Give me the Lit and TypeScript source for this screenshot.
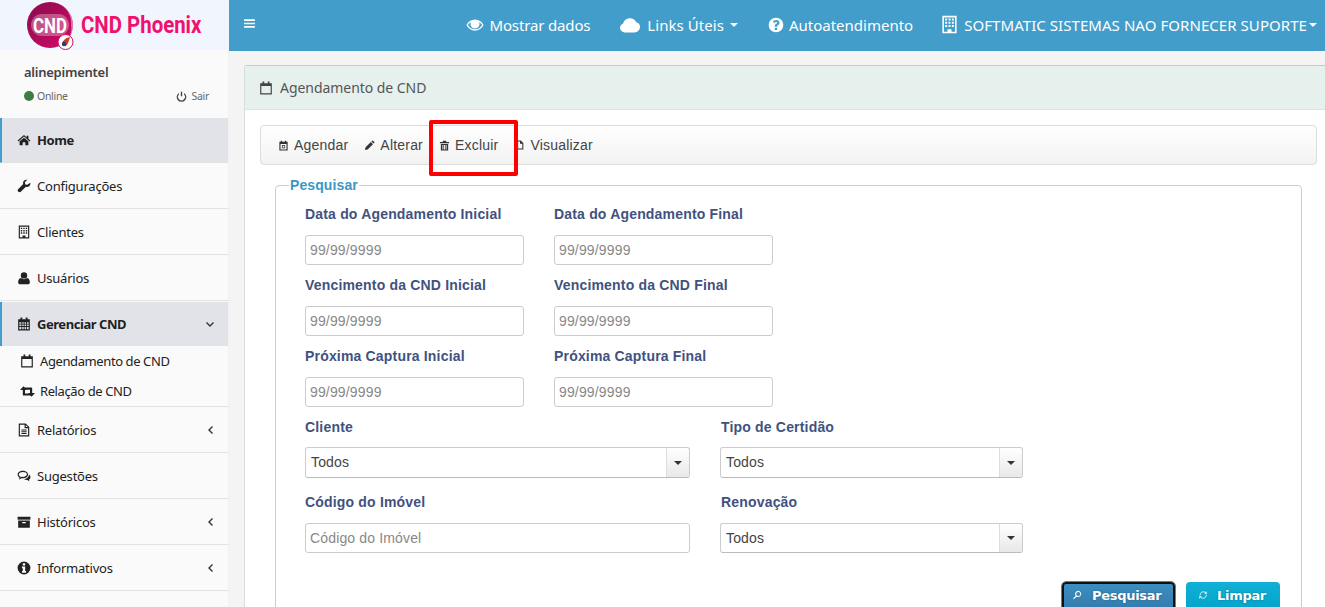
import { LitElement, html, css, svg } from "lit";
import { customElement } from "lit/decorators.js";

const ICONS: Record<string, any> = {
  home: svg`<path d="M12 3.500 1 13l1.300 1.500L12 6.200l9.700 8.300L23 13l-3.500-3V4.500h-3v3z"/><path d="M12 8 4.500 14.300V21h5.200v-5h4.600v5h5.200v-6.700z"/>`,
  wrench: svg`<path d="M22.600 6.400c.6 1.900.1 4.300-1.400 5.700-1.700 1.700-4 2-6 1.200L6.500 22c-1 1-2.800 1-3.900 0l-.7-.7c-1-1-1-2.800 0-3.900l8.800-8.700c-.7-2-.4-4.300 1.300-5.900C13.400 1.300 15.700.8 17.600 1.400L13.500 5.500l.6 3.800 3.800.6z"/>`,
  building: svg`<path fill-rule="evenodd" d="M3 1h18v22H3zM5 3v18h4.500v-3h5v3H19V3zM6.500 4.500h2.500v2.500H6.500zM10.750 4.500h2.500v2.500h-2.500zM15 4.500h2.500v2.500H15zM6.500 8.500h2.500V11H6.500zM10.750 8.500h2.500V11h-2.500zM15 8.500h2.500V11H15zM6.500 12.500h2.500V15H6.500zM10.750 12.500h2.500V15h-2.500zM15 12.500h2.500V15H15z"/>`,
  user: svg`<circle cx="12" cy="7.500" r="5.500"/><path d="M6.500 12c1.500 1.300 3.500 2 5.500 2s4-.7 5.500-2c3 .3 4.500 3.500 4.500 7.500 0 2-1.500 3-3.200 3H5.200C3.500 22.500 2 21.500 2 19.500 2 15.500 3.500 12.300 6.500 12z"/>`,
  calendar: svg`<path fill-rule="evenodd" d="M6 1h3v3H15V1h3v3h4v19H2V4h4zM4 9v2.500h3.500V9zM9 9v2.500h2.500V9zM13 9v2.500h2.500V9zM17 9v2.500h3V9zM4 13v2.500h3.500V13zM9 13v2.500h2.500V13zM13 13v2.500h2.500V13zM17 13v2.500h3V13zM4 17v4h3.500v-4zM9 17v4h2.500v-4zM13 17v4h2.500v-4zM17 17v4h3v-4z"/>`,
  calendarO: svg`<path fill-rule="evenodd" d="M6 1h3v3h6V1h3v3h4v19H2V4h4zM4 8.500V21h16V8.500z"/>`,
  retweet: svg`<path d="M0 9.500 5.500 3.500 11 9.500H8V15h7l3.500 3.500H6c-.9 0-1.500-.6-1.500-1.500V9.500z"/><path d="M24 14.500 18.500 20.500 13 14.500h3V9H9L5.500 5.500H18c.9 0 1.500.6 1.500 1.500v7.500z"/>`,
  file: svg`<path fill-rule="evenodd" d="M3 1h12l6 6v16H3zM5 3v18h14V9h-6V3zM15 3.500V7h3.500zM7.500 11h9v1.700h-9zM7.500 14h9v1.700h-9zM7.500 17h9v1.700h-9z"/>`,
  comments: svg`<path fill-rule="evenodd" d="M10 3c5 0 9 2.800 9 6.500S15 16 10 16c-.8 0-1.600-.1-2.400-.2C6.200 17 4.500 17.700 3 18c.7-1 1.200-2 1.300-3.200C2.300 13.600 1 11.700 1 9.500 1 5.800 5 3 10 3zm0 2c-4 0-7 2-7 4.500 0 1.600 1.200 3 3.200 3.800-.1.500-.2 1-.4 1.400.7-.4 1.300-.9 1.800-1.400.8.100 1.600.2 2.400.2 4 0 7-2 7-4.500S14 5 10 5z"/><path d="M20.500 9.500C22.200 10.700 23 12.200 23 14c0 1.800-1 3.300-2.500 4.300.1.900.5 1.800 1.100 2.700-1.300-.3-2.700-.9-3.700-2-2.300.2-4.500-.5-6-1.800 4.500 0 8.600-3.200 8.600-7.700z"/>`,
  archive: svg`<path d="M1 3h22v5H1z"/><path fill-rule="evenodd" d="M2 9.500h20V22H2zM9 12v2h6v-2z"/>`,
  info: svg`<path fill-rule="evenodd" d="M12 1a11 11 0 1 0 0 22 11 11 0 0 0 0-22zM10 4h4v3.500h-4zM8.500 9.500H14V17h1.500v3h-7v-3H10v-4.500H8.500z"/>`,
  eye: svg`<path fill-rule="evenodd" d="M12 4.500C7 4.500 2.800 7.500.5 12c2.300 4.500 6.500 7.500 11.500 7.500s9.200-3 11.500-7.500C21.200 7.500 17 4.500 12 4.500zM12 6.200c3.900 0 7.300 2.300 9.400 5.800-2.100 3.500-5.500 5.800-9.400 5.800S4.700 15.500 2.600 12c1-1.700 2.300-3 3.800-4-.3.800-.5 1.500-.5 2.400a6.100 6.100 0 1 0 11.600-2.500c1.500 1 2.800 2.400 3.700 4-1.800-3.300-5.500-5.700-9.700-5.700z"/>`,
  cloud: svg`<path d="M6 21c-3.300 0-6-2.500-6-5.600 0-2.400 1.500-4.500 3.800-5.200C4.700 6.600 8 4 12 4c3.300 0 6.100 1.800 7.400 4.700 2.700.4 4.600 2.700 4.600 5.500 0 3.700-3 6.800-6.800 6.800z"/>`,
  question: svg`<path fill-rule="evenodd" d="M12 1a11 11 0 1 0 0 22 11 11 0 0 0 0-22zM12.300 4.500c2.800 0 5 1.800 5 4.300 0 1.900-1.200 2.900-2.500 3.700-.8.500-1.100.8-1.100 1.500v.7h-3.500v-1c0-1.900 1-2.700 2.200-3.400.8-.5 1.300-.8 1.300-1.500s-.7-1.300-1.600-1.300c-1.100 0-1.700.6-2.300 1.500L7.500 7.400c1-1.800 2.600-2.900 4.800-2.900zM10.200 16h3.500v3.500h-3.500z"/>`,
  power: svg`<path d="M10.500 1.500h3v10h-3z"/><path d="M6.500 4.200v3.400a7.500 7.500 0 1 0 11 0V4.200a10.500 10.500 0 1 1-11 0z"/>`,
  bars: svg`<path d="M2 4h20v3.200H2zM2 10.400h20v3.200H2zM2 16.800h20V20H2z"/>`,
  pencil: svg`<path d="M2 22l1.500-6L15 4.500l4.500 4.500L8 20.500zM16.200 3.300l1.800-1.800c.5-.5 1.100-.5 1.600 0l2.900 2.900c.5.5.5 1.100 0 1.600l-1.800 1.800z"/>`,
  trash: svg`<path fill-rule="evenodd" d="M9 1.500h6L16.500 4.500H22v2.500H2V4.500h5.500zM4 8.500h16V23H4zM7.500 11v9.500h2V11zM11 11v9.500h2V11zM14.500 11v9.500h2V11z"/>`,
  clockCal: svg`<path fill-rule="evenodd" d="M6 1.500h3V4h6V1.500h3V4h3v19H3V4h3zM5.500 8.500V20.500h13V8.500zM8.500 11h7v7h-7zM10 12.500v4h4v-4z"/>`,
  filePlain: svg`<path fill-rule="evenodd" d="M5 1h9l6 6v16H5zM7.500 3.500v17h10V9h-5.500V3.500z"/>`,
  search: svg`<path fill-rule="evenodd" d="M15 2a7.500 7.500 0 0 0-6 12L2.500 20.500l1.800 1.800L10.800 16A7.500 7.500 0 1 0 15 2zm0 2.500a5 5 0 1 1 0 10 5 5 0 0 1 0-10z"/>`,
  refresh: svg`<path fill="none" stroke="currentColor" stroke-width="2" d="M5 13a8 8 0 0 1 13-7M20 11a8 8 0 0 1-13 7"/><path d="M21 3v6h-6zM3 21v-6h6z"/>`,
};

const icon = (name: string, size: number) => html`<svg class="ic" width=${size} height=${size} viewBox="0 0 24 24" fill="currentColor" aria-hidden="true">${ICONS[name]}</svg>`;

const caret = html`<span class="caret"></span>`;

interface MenuItem { label: string; icon: string; active?: boolean; arrow?: "left" | "down" }
const MENU_TOP: MenuItem[] = [
  { label: "Home", icon: "home", active: true },
  { label: "Configurações", icon: "wrench" },
  { label: "Clientes", icon: "building" },
  { label: "Usuários", icon: "user" },
  { label: "Gerenciar CND", icon: "calendar", active: true, arrow: "down" },
];
const MENU_BOTTOM: MenuItem[] = [
  { label: "Relatórios", icon: "file", arrow: "left" },
  { label: "Sugestões", icon: "comments" },
  { label: "Históricos", icon: "archive", arrow: "left" },
  { label: "Informativos", icon: "info", arrow: "left" },
];

const arrow = (d?: "left" | "down") =>
  !d ? "" : html`<svg class="arrow" width="10" height="10" viewBox="0 0 10 10" fill="none" stroke="currentColor" stroke-width="1.400">${d === "left" ? svg`<path d="M6.500 1.500 3 5l3.500 3.500"/>` : svg`<path d="M1.500 3.500 5 7l3.500-3.500"/>`}</svg>`;

@customElement("app-root")
export class AppRoot extends LitElement {
  static styles = css`
    :host { display: block; width: 1325px; height: 607px; overflow: hidden; font-family: "Noto Sans", sans-serif; background: #f4f4f4; color: #333; }
    .page { display: grid; grid-template-columns: 229px 1fr; height: 607px; }
    .ic { display: block; flex: none; }

    .side { background: #fafafa; box-shadow: inset -1px 0 0 #f2f2f2; overflow: hidden; }
    .logo { height: 50px; background: #f1f5fe; display: flex; align-items: center; gap: 7px; padding-left: 27px; }
    .mark { width: 47px; height: 50px; flex: none; }
    .mark text { font-family: "Roboto", sans-serif; font-weight: 700; font-size: 21px; fill: #fff; }
    .brand { font-family: "Roboto", sans-serif; font-weight: 700; font-size: 24px; color: #f0106e; transform: scaleX(.85); transform-origin: left; white-space: nowrap; }
    .user { height: 68px; padding: 14px 20px 0 24px; box-sizing: border-box; }
    .uname { font-size: 13px; font-weight: 600; line-height: 16px; color: #444; letter-spacing: -.25px; }
    .status { display: flex; justify-content: space-between; align-items: center; margin-top: 9px; font-size: 10.5px; line-height: 14px; color: #666; letter-spacing: -.3px; }
    .status span { display: flex; align-items: center; }
    .dot { width: 10px; height: 10px; border-radius: 50%; background: #3d7d44; margin-right: 3px; }
    .status .ic { margin-right: 4px; color: #444; }

    .item { height: 46px; box-sizing: border-box; display: flex; align-items: center; padding: 0 13px 0 17px; border-bottom: 1px solid #e2e2e2; font-size: 13px; color: #222; letter-spacing: -.22px; }
    .item .lbl { margin-left: 6px; flex: 1; }
    .item.active { height: 45px; background: #e1e3e9; background-clip: padding-box; border-left: 2px solid #429dcb; padding-left: 15px; margin-right: 1px; font-weight: 700; color: #1f1f1f; letter-spacing: -.45px; }
    .item.managing { height: 44px; margin-top: 1px; border-bottom: 0; }
    .sub { height: 61px; box-sizing: border-box; border-bottom: 1px solid #e2e2e2; }
    .sub div { height: 30px; display: flex; align-items: center; padding-left: 20px; gap: 6px; font-size: 13px; color: #222; letter-spacing: -.4px; }
    .sub .wide .ic { margin-right: -1px; }
    .arrow { color: #333; flex: none; }

    .main { min-width: 0; display: flex; flex-direction: column; }
    .top { height: 51px; box-sizing: border-box; flex: none; background: #429dcb; color: #fff; display: flex; align-items: center; padding: 0 8px 2px 14px; font-size: 15px; letter-spacing: -.15px; }
    .burger { margin-right: auto; margin-top: -2px; }
    .nav { display: flex; align-items: center; gap: 5px; white-space: nowrap; margin-left: 30px; }
    .nav.links { gap: 7px; letter-spacing: .05px; }
    .nav.auto { letter-spacing: 0; }
    .nav.soft { letter-spacing: .06px; margin-left: 27px; }
    .caret { display: inline-block; width: 0; height: 0; border-left: 4px solid transparent; border-right: 4px solid transparent; border-top: 4px solid currentColor; margin-left: -1px; }
    .soft .caret { margin-left: -3px; }

    .content { padding: 14px 0 0 15px; flex: 1; min-height: 0; overflow: hidden; }
    .panel { background: #fff; border: 1px solid #d6dfd6; border-top-color: #b5d8a5; border-right: 0; border-radius: 3px 0 0 0; height: 600px; box-sizing: border-box; }
    .phead { height: 44px; box-sizing: border-box; background: #e6f0ec; border-bottom: 1px solid #d7e6e0; display: flex; align-items: center; padding-left: 14px; gap: 7px; font-size: 14px; color: #555; letter-spacing: -.05px; }
    .phead .ic { color: #444; }
    .pbody { padding: 15px 8px 0 15px; }
    .bar { position: relative; height: 40px; box-sizing: border-box; border: 1px solid #ddd; border-radius: 4px; background: linear-gradient(#ffffff, #f2f2f2); display: flex; align-items: center; padding-left: 17px; font: 14px "Liberation Sans", Arial, sans-serif; letter-spacing: .2px; color: #444; }
    .tb { display: flex; align-items: center; gap: 5px; margin-left: 16px; }
    .tb:first-child { margin-left: 0; }
    .tb.far { margin-left: 17px; }
    .tb .ic { color: #333; }
    .hl { position: absolute; left: 168px; top: -6px; width: 81px; height: 48px; border: 4px solid #ff0000; border-radius: 2px; }

    fieldset { margin: 14px 0 0 15px; padding: 0 29px; border: 1px solid #ccc; border-radius: 4px; width: 1027px; box-sizing: border-box; height: 500px; position: relative; top: -1px; min-width: 0; }
    legend { font: bold 14px "Liberation Sans", Arial, sans-serif; color: #3c97c5; padding: 0 1px; margin-left: -16px; letter-spacing: .1px; line-height: 14px; }
    .form { font-family: "Liberation Sans", Arial, sans-serif; font-size: 14px; margin-top: 14px; }
    .pair { display: grid; grid-template-columns: 219px 219px; gap: 0 30px; }
    .two { display: grid; grid-template-columns: 385px 303px; gap: 0 30px; }
    .fld { height: 71px; box-sizing: border-box; }
    .two .fld { height: 75px; }
    .two:last-child .fld { height: 59px; }
    label { display: block; font-weight: 700; color: #3f5280; letter-spacing: .18px; line-height: 16px; height: 29px; }
    .two:nth-of-type(4) label { height: 28px; }
    .two .fld:last-child label { margin-left: 1px; }
    .inp { height: 30px; box-sizing: border-box; border: 1px solid #ccc; border-radius: 3px; background: #fff; padding: 0 4px; display: flex; align-items: center; color: #888; letter-spacing: .15px; }
    .two:nth-of-type(4) .inp { height: 31px; padding-bottom: 1px; }
    .two:nth-of-type(4) .sel i { margin-bottom: -1px; height: calc(100% + 1px); }
    .sel { justify-content: space-between; padding: 0 0 0 5px; color: #444; border-bottom-color: #bbb; }
    .sel i { width: 23px; height: 100%; box-sizing: border-box; border-left: 1px solid #ddd; border-radius: 0 3px 3px 0; background: linear-gradient(#fff, #e8e8e8); display: flex; align-items: center; justify-content: center; }
    .sel i::after { content: ""; border-left: 4px solid transparent; border-right: 4px solid transparent; border-top: 4px solid #333; }

    .btns { display: flex; justify-content: flex-end; gap: 11px; margin-right: -8px; padding-top: 29px; }
    .btn { height: 34px; box-sizing: border-box; display: flex; align-items: center; border-radius: 4px; font: bold 13px "DejaVu Sans", sans-serif; letter-spacing: -.3px; color: #fff; text-shadow: 0 0 2px rgba(0,0,0,.35); padding-bottom: 8px; }
    .btn.a { width: 113px; gap: 10px; background: linear-gradient(#3d8ec0, #2f78a8); border: 2px solid #111; outline: 1px solid #3d8ec0; padding-left: 8px; }
    .btn.b { width: 94px; gap: 9px; background: linear-gradient(#12b0d6, #00a0c8); padding-left: 12px; }
  `;

  private renderItem(m: MenuItem) {
    const cls = `item ${m.active ? "active" : ""} ${m.arrow === "down" ? "managing" : ""}`;
    return html`<div class=${cls}>${icon(m.icon, 14)}<span class="lbl">${m.label}</span>${arrow(m.arrow)}</div>`;
  }

  private field(l: string, v = "99/99/9999") {
    return html`<div class="fld"><label>${l}</label><div class="inp">${v}</div></div>`;
  }
  private select(l: string) {
    return html`<div class="fld"><label>${l}</label><div class="inp sel">Todos<i></i></div></div>`;
  }

  render() {
    return html`<div class="page">
      <aside class="side">
        <div class="logo">
          <svg class="mark" viewBox="0 0 47 50">
            <defs><linearGradient id="lg" x1="0" y1="0" x2="1" y2="1"><stop offset="0" stop-color="#8a0a4e"/><stop offset="1" stop-color="#d40a68"/></linearGradient></defs>
            <circle cx="23" cy="25" r="23" fill="url(#lg)"/>
            <path d="M20 2a23 23 0 0 1 26 23 23 23 0 0 1-3 11 20 20 0 0 0 1-11 21 21 0 0 0-24-23z" fill="#fff" fill-opacity=".45"/>
            <rect x="4" y="14" width="38" height="22" rx="11" fill="#fff" fill-opacity=".3"/>
            <text x="23" y="33" text-anchor="middle" textLength="34" lengthAdjust="spacingAndGlyphs">CND</text>
            <circle cx="38.5" cy="42" r="7.500" fill="#fff" stroke="#d40a68"/>
            <path d="M35 45c0-4 3-7 8-8-1 4-2 7-4 9z" fill="#c8401e"/>
            <circle cx="37" cy="44" r="2.200" fill="#1d3f8a"/>
          </svg>
          <span class="brand">CND Phoenix</span>
        </div>
        <div class="user">
          <div class="uname">alinepimentel</div>
          <div class="status"><span><span class="dot"></span>Online</span><span>${icon("power", 11)}Sair</span></div>
        </div>
        ${MENU_TOP.map((m) => this.renderItem(m))}
        <div class="sub">
          <div>${icon("calendarO", 14)}Agendamento de CND</div>
          <div class="wide">${icon("retweet", 15)}Relação de CND</div>
        </div>
        ${MENU_BOTTOM.map((m) => this.renderItem(m))}
      </aside>
      <div class="main">
        <header class="top">
          <span class="burger">${icon("bars", 13)}</span>
          <span class="nav">${icon("eye", 18)}Mostrar dados</span>
          <span class="nav links">${icon("cloud", 20)}Links Úteis${caret}</span>
          <span class="nav auto">${icon("question", 16)}Autoatendimento</span>
          <span class="nav soft">${icon("building", 19)}SOFTMATIC SISTEMAS NAO FORNECER SUPORTE${caret}</span>
        </header>
        <div class="content">
          <section class="panel">
            <div class="phead">${icon("calendarO", 14)}Agendamento de CND</div>
            <div class="pbody">
              <div class="bar">
                <span class="tb">${icon("clockCal", 11)}Agendar</span>
                <span class="tb">${icon("pencil", 11)}Alterar</span>
                <span class="tb">${icon("trash", 11)}Excluir</span>
                <span class="tb far">${icon("filePlain", 10)}Visualizar</span>
                <div class="hl"></div>
              </div>
              <fieldset>
                <legend>Pesquisar</legend>
                <div class="form">
                  <div class="pair">${this.field("Data do Agendamento Inicial")}${this.field("Data do Agendamento Final")}</div>
                  <div class="pair">${this.field("Vencimento da CND Inicial")}${this.field("Vencimento da CND Final")}</div>
                  <div class="pair">${this.field("Próxima Captura Inicial")}${this.field("Próxima Captura Final")}</div>
                  <div class="two">${this.select("Cliente")}${this.select("Tipo de Certidão")}</div>
                  <div class="two">${this.field("Código do Imóvel", "Código do Imóvel")}${this.select("Renovação")}</div>
                </div>
                <div class="btns">
                  <div class="btn a">${icon("search", 10)}Pesquisar</div>
                  <div class="btn b">${icon("refresh", 10)}Limpar</div>
                </div>
              </fieldset>
            </div>
          </section>
        </div>
      </div>
    </div>`;
  }
}
